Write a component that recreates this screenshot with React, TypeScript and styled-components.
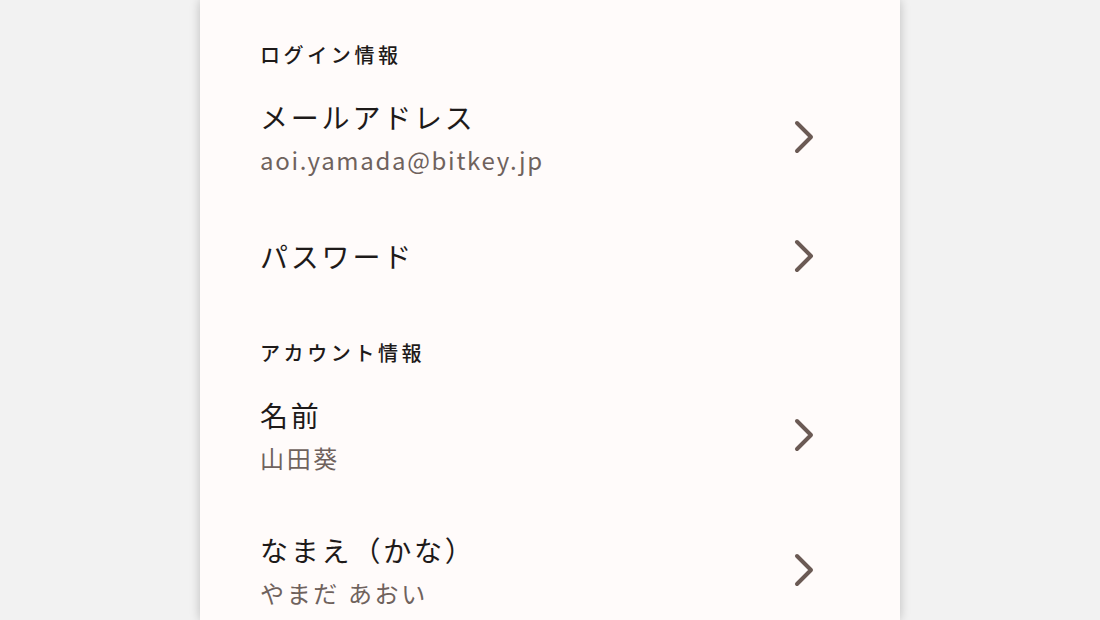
import React from 'react';
import styled, { createGlobalStyle } from 'styled-components';

const palette = {
  page: '#f2f2f2',
  card: '#fffbfa',
  text: '#1e1a19',
  sub: '#6f625d',
  icon: '#6b5a54',
};

const GlobalStyle = createGlobalStyle`
  html, body {
    margin: 0;
    padding: 0;
    background: ${palette.page};
    font-family: 'Noto Sans CJK JP', 'Noto Sans', sans-serif;
  }
  #root {
    min-height: 620px;
  }
`;

const Page = styled.div`
  display: flex;
  justify-content: center;
  height: 620px;
  overflow: hidden;
`;

const Card = styled.div`
  width: 700px;
  min-height: 620px;
  background: ${palette.card};
  box-shadow: 0 0 10px rgba(0, 0, 0, 0.22);
  padding: 10px 72px 0 60px;
  box-sizing: border-box;
`;

const SectionTitle = styled.h2`
  margin: 0;
  padding-top: 31px;
  font-size: 20px;
  line-height: 28px;
  font-weight: 500;
  letter-spacing: 0.18em;
  color: ${palette.text};
`;

const Row = styled.div`
  display: flex;
  align-items: center;
  justify-content: space-between;
  padding: 28px 0;
  cursor: pointer;
`;

const RowText = styled.div`
  display: flex;
  flex-direction: column;
  gap: 6px;
`;

const Label = styled.div`
  font-size: 28px;
  line-height: 41px;
  letter-spacing: 0.1em;
  color: ${palette.text};
`;

// latin values (mail address) are set a little tighter than kana / kanji
const Value = styled.div<{ $latin?: boolean }>`
  font-size: 24px;
  line-height: 32px;
  letter-spacing: ${(p) => (p.$latin ? '0.07em' : '0.11em')};
  color: ${palette.sub};
`;

const IconBox = styled.div`
  width: 48px;
  height: 48px;
  flex-shrink: 0;
  display: flex;
  align-items: center;
  justify-content: center;
`;

const Chevron: React.FC = () => (
  <IconBox>
    <svg width="48" height="48" viewBox="0 0 48 48" fill="none">
      <polyline
        points="17,10 31,24 17,38"
        stroke={palette.icon}
        strokeWidth="4"
        strokeLinecap="round"
        strokeLinejoin="round"
      />
    </svg>
  </IconBox>
);

type Item = { label: string; value?: string; latin?: boolean };

const SettingRow: React.FC<Item> = ({ label, value, latin }) => (
  <Row>
    <RowText>
      <Label>{label}</Label>
      {value && <Value $latin={latin}>{value}</Value>}
    </RowText>
    <Chevron />
  </Row>
);

const sections: { title: string; items: Item[] }[] = [
  {
    title: 'ログイン情報',
    items: [
      { label: 'メールアドレス', value: 'aoi.yamada@bitkey.jp', latin: true },
      { label: 'パスワード' },
    ],
  },
  {
    title: 'アカウント情報',
    items: [
      { label: '名前', value: '山田葵' },
      { label: 'なまえ（かな）', value: 'やまだ あおい' },
    ],
  },
];

const App: React.FC = () => (
  <>
    <GlobalStyle />
    <Page>
      <Card>
        {sections.map((section) => (
          <section key={section.title}>
            <SectionTitle>{section.title}</SectionTitle>
            {section.items.map((item) => (
              <SettingRow key={item.label} {...item} />
            ))}
          </section>
        ))}
      </Card>
    </Page>
  </>
);

export default App;
